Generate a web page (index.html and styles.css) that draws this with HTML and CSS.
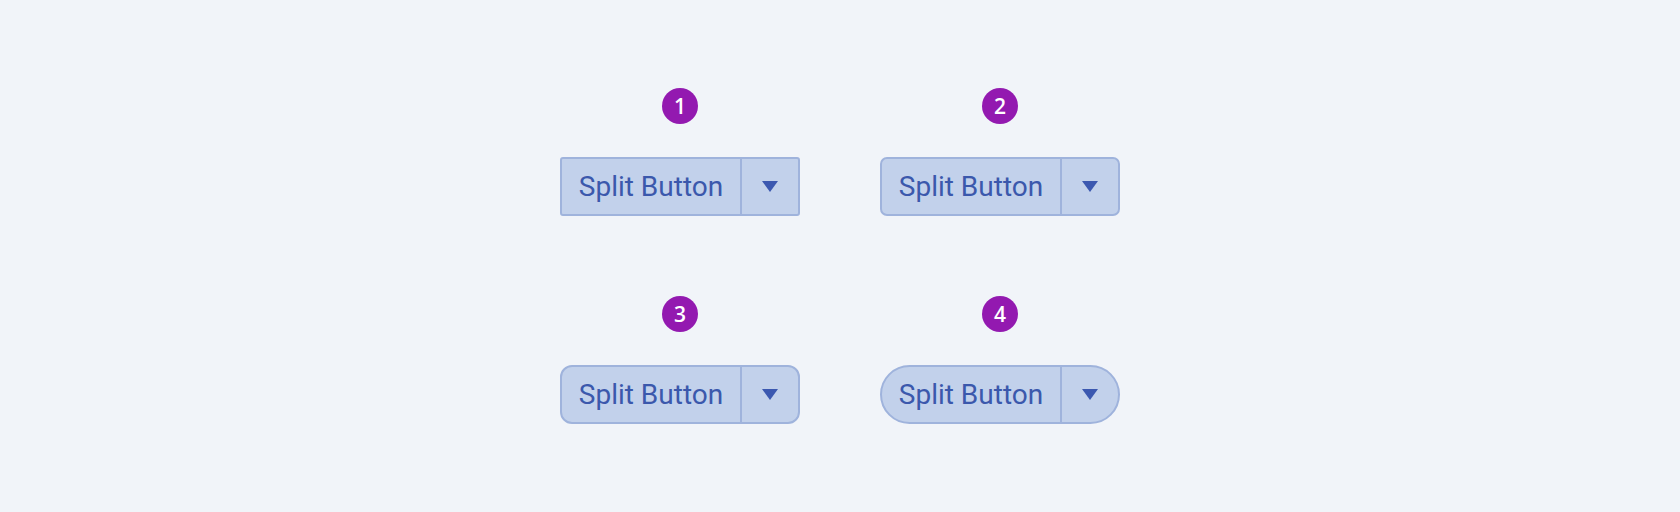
FILE: index.html
```html
<!DOCTYPE html>
<html lang="en">
<head>
<meta charset="utf-8">
<title>Split Buttons</title>
<link rel="stylesheet" href="styles.css">
</head>
<body>
<main class="stage">
  <div class="grid">
    <div class="cell">
      <span class="badge">1</span>
      <div class="split r1">
        <span class="split-main">Split Button</span>
        <span class="split-toggle"><svg class="caret" viewBox="0 0 16 11" width="16" height="11"><path d="M0 0H16L8 11Z"/></svg></span>
      </div>
    </div>
    <div class="cell">
      <span class="badge">2</span>
      <div class="split r2">
        <span class="split-main">Split Button</span>
        <span class="split-toggle"><svg class="caret" viewBox="0 0 16 11" width="16" height="11"><path d="M0 0H16L8 11Z"/></svg></span>
      </div>
    </div>
    <div class="cell">
      <span class="badge">3</span>
      <div class="split r3">
        <span class="split-main">Split Button</span>
        <span class="split-toggle"><svg class="caret" viewBox="0 0 16 11" width="16" height="11"><path d="M0 0H16L8 11Z"/></svg></span>
      </div>
    </div>
    <div class="cell">
      <span class="badge">4</span>
      <div class="split r4">
        <span class="split-main">Split Button</span>
        <span class="split-toggle"><svg class="caret" viewBox="0 0 16 11" width="16" height="11"><path d="M0 0H16L8 11Z"/></svg></span>
      </div>
    </div>
  </div>
</main>
</body>
</html>
```

FILE: styles.css
```css
html, body {
  margin: 0;
  padding: 0;
  height: 100%;
}

body {
  background: #f1f4f9;
  font-family: Roboto, "Liberation Sans", sans-serif;
}

.stage {
  height: 512px;
  display: flex;
  align-items: center;
  justify-content: center;
}

.grid {
  display: grid;
  grid-template-columns: 240px 240px;
  column-gap: 80px;
  row-gap: 80px;
}

.cell {
  display: flex;
  flex-direction: column;
  align-items: center;
  gap: 33px;
}

.badge {
  width: 36px;
  height: 36px;
  border-radius: 50%;
  background: #9319b0;
  color: #ffffff;
  font-family: "Open Sans", "Noto Sans", sans-serif;
  font-weight: 550;
  font-size: 21px;
  line-height: 36px;
  text-align: center;
}

.split {
  box-sizing: border-box;
  width: 240px;
  height: 59px;
  display: flex;
  align-items: stretch;
  background: #c2d1eb;
  border: 2px solid #9fb3dc;
  color: #3b58ac;
  overflow: hidden;
}

.split-main {
  flex: 1;
  display: flex;
  align-items: center;
  justify-content: center;
  font-size: 28px;
  border-right: 2px solid #9fb3dc;
  padding-bottom: 1px;
}

.split-toggle {
  width: 56px;
  display: flex;
  align-items: center;
  justify-content: center;
}

.caret {
  display: block;
  fill: #3b58b0;
}

.r1 { border-radius: 3px; }
.r2 { border-radius: 7px; }
.r3 { border-radius: 12px; }
.r4 { border-radius: 30px; }
```
